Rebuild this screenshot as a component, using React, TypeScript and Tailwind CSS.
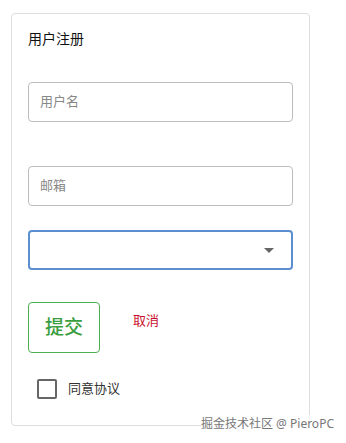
import React from "react";

export default function App() {
  const font = { fontFamily: '"Noto Sans", "Noto Sans CJK SC", sans-serif' };
  return (
    <div className="relative w-[346px] h-[443px] bg-white" style={font}>
      <div className="pt-[13px] pl-[11px]">
        <div className="w-[299px] h-[413px] border border-[#dddddd] rounded-[4px] px-[16px] flex flex-col">
          <div className="mt-[15px] text-[14px] leading-[20px] text-[#111]">用户注册</div>
          <div className="mt-[33px] h-[40px] border border-[#bdbdbd] rounded-[4px] flex items-center px-[11px] text-[13px] text-[#888]">
            用户名
          </div>
          <div className="mt-[44px] h-[40px] border border-[#bdbdbd] rounded-[4px] flex items-center px-[11px] text-[13px] text-[#888]">
            邮箱
          </div>
          <div className="mt-[24px] h-[40px] border-2 border-[#5b8fcf] rounded-[4px] flex items-center justify-end pr-[17px]">
            <svg width="10" height="5" viewBox="0 0 10 5">
              <path d="M0 0 L10 0 L5 5 Z" fill="#666" />
            </svg>
          </div>
          <div className="mt-[32px] flex items-start">
            <div className="w-[72px] h-[51px] border border-[#4caf50] rounded-[4px] flex items-center justify-center text-[19px] font-medium text-[#3a9d3e]">
              提交
            </div>
            <div className="ml-[33px] mt-[9px] text-[13px] leading-[18px] text-[#c8102e]">取消</div>
          </div>
          <div className="mt-[26px] ml-[9px] flex items-center">
            <div className="w-[20px] h-[20px] border-2 border-[#666] rounded-[2px]"></div>
            <div className="ml-[11px] text-[13px] text-[#333]">同意协议</div>
          </div>
        </div>
      </div>
      <div className="absolute left-[201px] top-[415px] text-[12px] leading-[17px] text-[#777] bg-white/70">
        掘金技术社区 @ PieroPC
      </div>
    </div>
  );
}
